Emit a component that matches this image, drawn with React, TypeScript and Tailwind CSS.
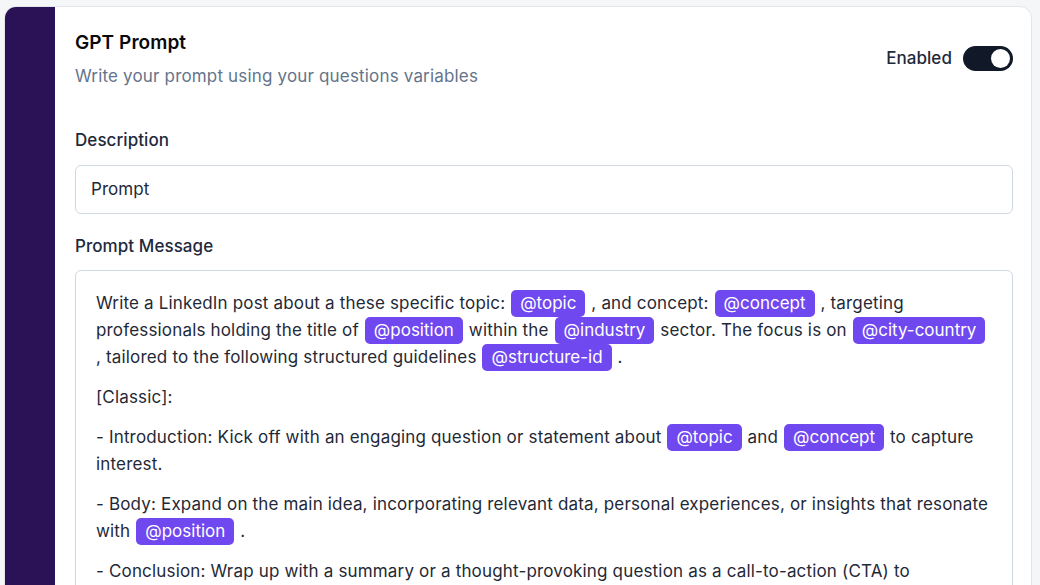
const Tag = ({ name }: { name: string }) => (
    <span className="inline-block mx-[1px] px-[9px] rounded-[5px] bg-[#7048ef] text-white leading-[27px] tracking-normal">@{name}</span>
)

export default function App() {
    return (
        <div className="h-[585px] overflow-hidden bg-[#f5f6f8] pt-[6px] pl-[4px] pr-[8px] font-['Inter',sans-serif] tracking-[0.004em]">
            <div className="flex min-h-[600px] rounded-xl border border-[#e2e6ec] bg-white overflow-hidden">
                <div className="w-[50px] shrink-0 bg-[#2b1257]" />
                <div className="flex-1 pl-[20px] pr-[18px] pt-[22px]">
                    <div className="flex items-center justify-between">
                        <div>
                            <h2 className="text-[19px] leading-[28px] font-semibold text-[#0a0a0a]">GPT Prompt</h2>
                            <p className="mt-[7px] text-[17px] leading-6 text-[#64748b] tracking-[0.01em]">Write your prompt using your questions variables</p>
                        </div>
                        <div className="flex items-center gap-[11px]">
                            <span className="text-[17px] text-[#1e293b] font-medium">Enabled</span>
                            <div className="w-[50px] h-[25px] rounded-full bg-[#111827] flex items-center justify-end pr-[3px]">
                                <div className="w-[19px] h-[19px] rounded-full bg-white" />
                            </div>
                        </div>
                    </div>

                    <label className="block mt-[40px] text-[17px] leading-6 font-medium text-[#1e293b]">Description</label>
                    <div className="mt-[13px] h-[49px] rounded-md border border-[#cfd8e3] px-[15px] flex items-center text-[17px] text-[#1f2937]">Prompt</div>

                    <label className="block mt-[20px] text-[17px] leading-6 font-medium text-[#1e293b]">Prompt Message</label>
                    <div className="mt-[12px] rounded-md border border-[#cfd8e3] pl-[20px] pr-[17px] pt-[19px] pb-6 text-[17px] leading-[27px] text-[#1f2937] tracking-[0.01em]">
                        <p className="mb-[13px]">
                            Write a LinkedIn post about a these specific topic: <Tag name="topic" /> , and concept: <Tag name="concept" /> , targeting professionals holding the title of <Tag name="position" /> within the <Tag name="industry" /> sector. The focus is on <Tag name="city-country" /> , tailored to the following structured guidelines <Tag name="structure-id" /> .
                        </p>
                        <p className="mb-[13px]">[Classic]:</p>
                        <p className="mb-[13px]">
                            - Introduction: Kick off with an engaging question or statement about <Tag name="topic" /> and <Tag name="concept" /> to capture interest.
                        </p>
                        <p className="mb-[13px]">
                            - Body: Expand on the main idea, incorporating relevant data, personal experiences, or insights that resonate with <Tag name="position" /> .
                        </p>
                        <p className="mb-[13px]">
                            - Conclusion: Wrap up with a summary or a thought-provoking question as a call-to-action (CTA) to encourage engagement.
                        </p>
                    </div>
                </div>
            </div>
        </div>
    )
}
